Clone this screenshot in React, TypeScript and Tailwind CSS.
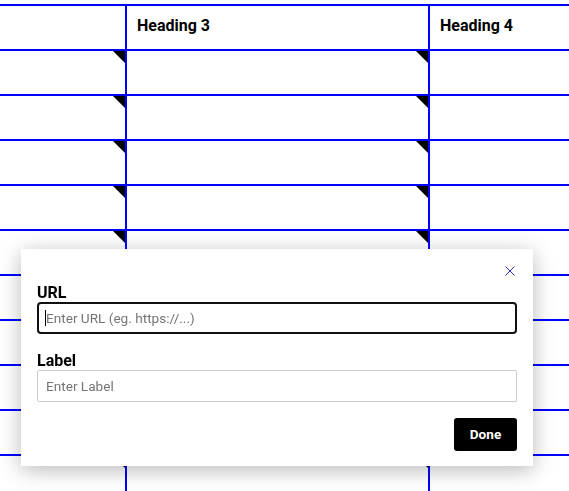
import React from "react";

const DATA_ROWS = 10;

const Marker = () => (
  <span className="absolute right-0 top-0 h-0 w-0 border-l-[12px] border-t-[12px] border-l-transparent border-t-black" />
);

export default function App() {
  return (
    <div className="relative min-h-screen overflow-hidden bg-white pt-1 font-['Roboto',sans-serif] text-black">
      {/* Table */}
      <div className="border-t-2 border-[#0000ff]">
        <div className="flex h-[45px] border-b-2 border-[#0000ff]">
          <div className="w-[127px] shrink-0 border-r-2 border-[#0000ff]" />
          <div className="w-[303px] shrink-0 border-r-2 border-[#0000ff] pl-[10px] pt-[10px] text-base font-bold leading-[19px]">
            Heading 3
          </div>
          <div className="flex-1 pl-[10px] pt-[10px] text-base font-bold leading-[19px]">Heading 4</div>
        </div>
        {Array.from({ length: DATA_ROWS }).map((_, i) => (
          <div key={i} className="flex h-[45px] border-b-2 border-[#0000ff]">
            <div className="relative w-[127px] shrink-0 border-r-2 border-[#0000ff]">
              <Marker />
            </div>
            <div className="relative w-[303px] shrink-0 border-r-2 border-[#0000ff]">
              <Marker />
            </div>
            <div className="flex-1" />
          </div>
        ))}
      </div>

      {/* Link dialog */}
      <div className="fixed left-[21px] top-[249px] w-[512px] bg-white px-4 pb-[15px] pt-4 shadow-[0_4px_20px_rgba(0,0,0,0.28)]">
        <div className="flex h-[18px] items-start justify-end">
          <button className="mr-[2px] mt-px">
            <svg width="10" height="10" viewBox="0 0 10 10" fill="none">
              <path d="M0.5 0.5L9.5 9.5M9.5 0.5L0.5 9.5" stroke="#2a2ab8" strokeWidth="1" />
            </svg>
          </button>
        </div>

        <label className="block text-base font-bold leading-[19px]">URL</label>
        <div className="relative">
          <input
            className="block h-8 w-full rounded-[4px] border-2 border-[#101010] pl-[7px] text-[13.6px] outline-none placeholder:text-[#757575]"
            placeholder="Enter URL (eg. https://...)"
          />
          <span className="absolute left-[8px] top-[8px] h-4 w-px bg-black" />
        </div>

        <label className="mt-[17px] block text-base font-bold leading-[19px]">Label</label>
        <input
          className="block h-8 w-full rounded-[2px] border border-[#cccccc] pl-2 text-[13.6px] outline-none placeholder:text-[#757575]"
          placeholder="Enter Label"
        />

        <div className="mt-4 flex justify-end">
          <button className="h-[33px] w-[63px] rounded-[3px] bg-black text-[13.6px] font-bold text-white">Done</button>
        </div>
      </div>
    </div>
  );
}
